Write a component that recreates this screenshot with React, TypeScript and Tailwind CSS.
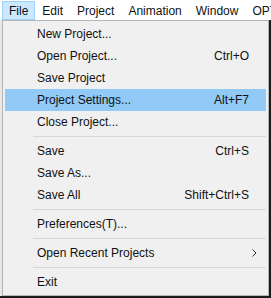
import React from 'react';

type Item =
  | { sep: true }
  | { sep?: false; label: string; shortcut?: string; sub?: boolean; active?: boolean };

const menuBar = ['File', 'Edit', 'Project', 'Animation', 'Window', 'OPTIONS'];

const items: Item[] = [
  { label: 'New Project...' },
  { label: 'Open Project...', shortcut: 'Ctrl+O' },
  { label: 'Save Project' },
  { label: 'Project Settings...', shortcut: 'Alt+F7', active: true },
  { label: 'Close Project...' },
  { sep: true },
  { label: 'Save', shortcut: 'Ctrl+S' },
  { label: 'Save As...' },
  { label: 'Save All', shortcut: 'Shift+Ctrl+S' },
  { sep: true },
  { label: 'Preferences(T)...' },
  { sep: true },
  { label: 'Open Recent Projects', sub: true },
  { sep: true },
  { label: 'Exit' },
];

export default function App() {
  return (
    <div
      className="w-[271px] h-[298px] overflow-hidden bg-[#1b1b1b] text-[12px] text-[#111]"
      style={{ fontFamily: '"Liberation Sans", Arial, sans-serif' }}
    >
      {/* menu bar */}
      <div className="h-[20px] bg-white flex pl-[2px] pt-[1px] whitespace-nowrap overflow-hidden">
        {menuBar.map((m, i) => (
          <div
            key={m}
            className={
              i === 0
                ? 'h-[19px] px-[6px] border border-[#99d1ff] bg-[#cce8ff] flex items-center leading-none shrink-0'
                : 'h-[19px] px-[7px] flex items-center leading-none shrink-0'
            }
          >
            {m}
          </div>
        ))}
      </div>

      {/* dropdown */}
      <div className="flex">
        <div className="w-[2px] h-[276px] bg-[#e8e8e8]" />
        <div className="w-[267px] border border-[#b4b4b4] bg-[#f0f0f0] pt-[2px] pb-[1px] pl-[2px] pr-[2px]">
          {items.map((it, i) =>
            it.sep ? (
              <div key={i} className="py-[3px] pl-[28px]">
                <div className="h-[1px] bg-[#d7d7d7]" />
              </div>
            ) : (
              <div
                key={i}
                className={`h-[22px] flex items-center pl-[32px] pr-[17px] ${it.active ? 'bg-[#91c9f7]' : ''}`}
              >
                <span className="flex-1 leading-none">{it.label}</span>
                {it.shortcut && <span className="leading-none">{it.shortcut}</span>}
                {it.sub && (
                  <svg width="5" height="8" viewBox="0 0 5 8" className="mr-[-8px]">
                    <polyline points="0.5,0.5 4,4 0.5,7.5" fill="none" stroke="#333" strokeWidth="1" />
                  </svg>
                )}
              </div>
            )
          )}
        </div>
      </div>
    </div>
  );
}
